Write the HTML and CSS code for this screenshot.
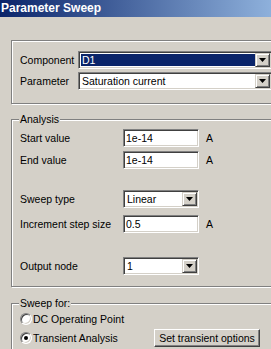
FILE: index.html
```html
<!DOCTYPE html>
<html lang="en">
<head>
  <meta charset="UTF-8" />
  <title>Parameter Sweep</title>
  <link rel="stylesheet" href="styles.css">
</head>
<body>

  <div class="window">
    <div class="titlebar">Parameter Sweep</div>

    <div class="content">
      <fieldset class="group group-top">
        <div class="row">
          <label class="lbl lbl-short">Component</label>
          <div class="field combo combo-wide">
            <span class="combo-text selected">D1</span>
            <span class="drop"></span>
          </div>
        </div>
        <div class="row row-tight">
          <label class="lbl lbl-short">Parameter</label>
          <div class="field combo combo-wide">
            <span class="combo-text">Saturation current</span>
            <span class="drop"></span>
          </div>
        </div>
      </fieldset>

      <fieldset class="group group-analysis">
        <legend>Analysis</legend>
        <div class="row">
          <label class="lbl">Start value</label>
          <div class="field input">1e-14</div>
          <span class="unit">A</span>
        </div>
        <div class="row row-end">
          <label class="lbl">End value</label>
          <div class="field input">1e-14</div>
          <span class="unit">A</span>
        </div>
        <div class="row row-sweep">
          <label class="lbl">Sweep type</label>
          <div class="field combo">
            <span class="combo-text">Linear</span>
            <span class="drop"></span>
          </div>
        </div>
        <div class="row row-step">
          <label class="lbl">Increment step size</label>
          <div class="field input">0.5</div>
          <span class="unit">A</span>
        </div>
        <div class="row row-node">
          <label class="lbl">Output node</label>
          <div class="field combo">
            <span class="combo-text">1</span>
            <span class="drop"></span>
          </div>
        </div>
      </fieldset>

      <fieldset class="group group-sweep">
        <legend>Sweep for:</legend>
        <div class="radio-row">
          <label class="radio-label"><span class="radio"></span>DC Operating Point</label>
        </div>
        <div class="radio-row row-transient">
          <label class="radio-label radio-wide"><span class="radio checked"></span>Transient Analysis</label>
          <button class="btn">Set transient options</button>
        </div>
      </fieldset>
    </div>
  </div>

</body>
</html>
```

FILE: styles.css
```css
:root {
  --face: #d4d0c8;
  --shadow: #808080;
  --dark: #404040;
  --light: #ffffff;
  --select: #0a246a;
}

body {
  margin: 0;
  background-color: var(--face);
  font-family: "Liberation Sans", Arial, sans-serif;
  font-size: 10.5px;
  color: #000;
  overflow: hidden;
}

.window {
  width: 271px;
  height: 349px;
  overflow: hidden;
}

.titlebar {
  height: 17px;
  line-height: 17px;
  padding-left: 1px;
  color: #fff;
  font-weight: bold;
  font-size: 12px;
  background: linear-gradient(90deg, #0a246a 0, #a6caf0 320px);
}

.content {
  padding: 23px 0 0 11px;
}

/* etched group boxes */
.group {
  box-sizing: border-box;
  width: 300px;
  margin: 0;
  padding: 0 0 0 8px;
  border: 1px solid var(--shadow);
  box-shadow: inset 1px 1px var(--light), 1px 1px var(--light);
}

.group legend {
  padding: 0 1px;
  margin-left: -1px;
  line-height: 12px;
  background-color: var(--face);
}

.group-top {
  padding-top: 10px;
  padding-bottom: 13px;
}

.group-analysis {
  margin-top: 9px;
  padding-top: 4px;
  padding-bottom: 11px;
}

.group-sweep {
  margin-top: 10px;
  padding-top: 3px;
  padding-bottom: 10px;
}

.row {
  display: flex;
  align-items: center;
  height: 18px;
}

.row-tight { margin-top: 3px; }
.row-end { margin-top: 4px; }
.row-sweep { margin-top: 21px; }
.row-step { margin-top: 7px; }
.row-node { margin-top: 24px; }

.lbl {
  width: 103px;
  flex-shrink: 0;
}

.lbl-short {
  width: 58px;
}

.unit {
  margin-left: 7px;
}

/* sunken fields */
.field {
  box-sizing: border-box;
  height: 18px;
  width: 76px;
  background-color: #fff;
  border: 1px solid;
  border-color: var(--shadow) var(--light) var(--light) var(--shadow);
  box-shadow: inset 1px 1px var(--dark), inset -1px -1px var(--face);
}

.input {
  padding-left: 2px;
  line-height: 16px;
}

.combo {
  display: flex;
  padding: 1px;
}

.combo-wide {
  width: 194px;
}

.combo-text {
  flex: 1;
  margin: 1px 0 1px 1px;
  padding-left: 1px;
  line-height: 12px;
  white-space: nowrap;
  overflow: hidden;
}

.combo-text.selected {
  background-color: var(--select);
  color: #fff;
}

.drop {
  box-sizing: border-box;
  width: 15px;
  height: 14px;
  flex-shrink: 0;
  display: flex;
  align-items: center;
  justify-content: center;
  background-color: var(--face);
  border: 1px solid;
  border-color: var(--face) var(--dark) var(--dark) var(--face);
  box-shadow: inset 1px 1px var(--light), inset -1px -1px var(--shadow);
}

.drop::after {
  content: "";
  width: 7px;
  height: 4px;
  background-color: #000;
  clip-path: polygon(0 0, 100% 0, 50% 100%);
}

/* radio buttons */
.radio-row {
  display: flex;
  align-items: center;
  height: 14px;
}

.row-transient {
  height: 18px;
  margin-top: 3px;
}

.radio-label {
  display: flex;
  align-items: center;
}

.radio-wide {
  width: 134px;
  flex-shrink: 0;
}

.radio {
  box-sizing: border-box;
  position: relative;
  width: 12px;
  height: 12px;
  margin-right: 1px;
  border-radius: 50%;
  background-color: #fff;
  border: 1px solid;
  border-color: var(--shadow) var(--light) var(--light) var(--shadow);
  box-shadow: inset 1px 1px var(--dark), inset -1px -1px var(--face);
}

.radio.checked::after {
  content: "";
  position: absolute;
  left: 3px;
  top: 3px;
  width: 4px;
  height: 4px;
  border-radius: 50%;
  background-color: #000;
}

.btn {
  box-sizing: border-box;
  width: 106px;
  height: 18px;
  padding: 0;
  font-family: inherit;
  font-size: 10.5px;
  color: #000;
  background-color: var(--face);
  border: 1px solid;
  border-color: var(--light) var(--dark) var(--dark) var(--light);
  box-shadow: inset -1px -1px var(--shadow);
}
```
